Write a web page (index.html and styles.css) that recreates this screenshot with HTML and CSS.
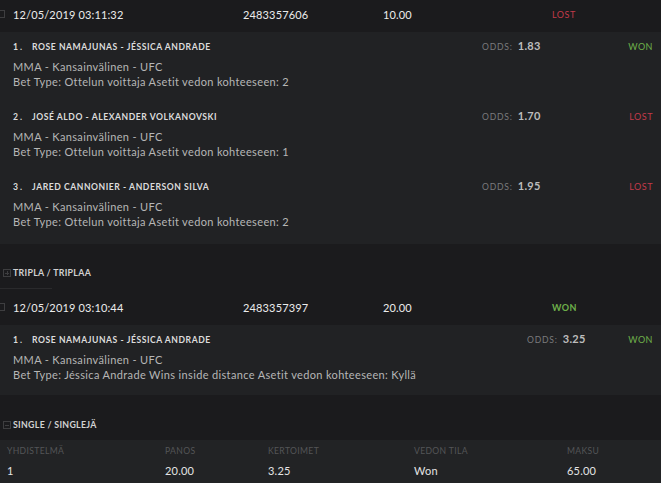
FILE: index.html
```html
<!DOCTYPE html>
<html>
<head>
<meta charset="utf-8">
<link rel="stylesheet" href="styles.css">
</head>
<body>
<div class="page">
  <div class="bet-row">
    <span class="toggle toggle-edge"></span>
    <div class="c-date">12/05/2019 03:11:32</div>
    <div class="c-id">2483357606</div>
    <div class="c-stake">10.00</div>
    <div class="c-status lost">LOST</div>
  </div>
  <div class="detail">
    <div class="item">
      <div class="item-main">
        <div class="title"><span class="num">1 .</span>ROSE NAMAJUNAS - JÉSSICA ANDRADE</div>
        <div class="line">MMA - Kansainvälinen - UFC</div>
        <div class="line">Bet Type: Ottelun voittaja Asetit vedon kohteeseen: 2</div>
      </div>
      <div class="odds"><span class="odds-label">ODDS:</span><span class="odds-val">1.83</span></div>
      <div class="status won">WON</div>
    </div>
    <div class="item">
      <div class="item-main">
        <div class="title"><span class="num">2 .</span>JOSÉ ALDO - ALEXANDER VOLKANOVSKI</div>
        <div class="line">MMA - Kansainvälinen - UFC</div>
        <div class="line">Bet Type: Ottelun voittaja Asetit vedon kohteeseen: 1</div>
      </div>
      <div class="odds"><span class="odds-label">ODDS:</span><span class="odds-val">1.70</span></div>
      <div class="status lost">LOST</div>
    </div>
    <div class="item">
      <div class="item-main">
        <div class="title"><span class="num">3 .</span>JARED CANNONIER - ANDERSON SILVA</div>
        <div class="line">MMA - Kansainvälinen - UFC</div>
        <div class="line">Bet Type: Ottelun voittaja Asetit vedon kohteeseen: 2</div>
      </div>
      <div class="odds"><span class="odds-label">ODDS:</span><span class="odds-val">1.95</span></div>
      <div class="status lost">LOST</div>
    </div>
  </div>

  <div class="section">
    <span class="toggle plus"></span>
    <span class="section-label">TRIPLA / TRIPLAA</span>
  </div>
  <div class="rule"></div>

  <div class="bet-row">
    <span class="toggle toggle-edge"></span>
    <div class="c-date">12/05/2019 03:10:44</div>
    <div class="c-id">2483357397</div>
    <div class="c-stake">20.00</div>
    <div class="c-status won bold">WON</div>
  </div>
  <div class="detail detail-single">
    <div class="item">
      <div class="item-main">
        <div class="title"><span class="num">1 .</span>ROSE NAMAJUNAS - JÉSSICA ANDRADE</div>
        <div class="line">MMA - Kansainvälinen - UFC</div>
        <div class="line">Bet Type: Jéssica Andrade Wins inside distance Asetit vedon kohteeseen: Kyllä</div>
      </div>
      <div class="odds odds-single"><span class="odds-label">ODDS:</span><span class="odds-val">3.25</span></div>
      <div class="status won">WON</div>
    </div>
  </div>

  <div class="section section-single">
    <span class="toggle minus"></span>
    <span class="section-label">SINGLE / SINGLEJÄ</span>
  </div>

  <div class="table">
    <div class="t-row t-head">
      <div class="t1">YHDISTELMÄ</div>
      <div class="t2">PANOS</div>
      <div class="t3">KERTOIMET</div>
      <div class="t4">VEDON TILA</div>
      <div class="t5">MAKSU</div>
    </div>
    <div class="t-row t-body">
      <div class="t1">1</div>
      <div class="t2">20.00</div>
      <div class="t3">3.25</div>
      <div class="t4">Won</div>
      <div class="t5">65.00</div>
    </div>
  </div>
</div>
</body>
</html>
```

FILE: styles.css
```css
html, body {
  margin: 0;
  padding: 0;
  background: #1b1b1d;
  font-family: Lato, "Noto Sans", sans-serif;
  color: #e6e6e6;
  overflow: hidden;
}
.page {
  width: 661px;
  margin-top: -4px;
}
.bet-row {
  display: flex;
  align-items: center;
  height: 36px;
  background: #1b1b1d;
  font-size: 11px;
  letter-spacing: 0.15px;
  color: #ececec;
  padding-left: 13px;
  position: relative;
}
.bet-row + .detail {
  margin-top: 0;
}
.toggle {
  position: absolute;
  width: 6px;
  height: 6px;
  border: 1px solid #3e3e40;
}
.toggle-edge {
  left: -3px;
  top: 14px;
}
.c-date { width: 230px; }
.c-id { width: 140px; }
.c-stake { width: 169px; }
.c-status {
  font-size: 9px;
  letter-spacing: 0.5px;
}
.bold { font-weight: 700; }
.lost { color: #c23a4a; }
.won { color: #6eb04a; }

.detail {
  background: #212224;
  padding: 7px 8px 15px 13px;
  display: flex;
  flex-direction: column;
  gap: 20px;
}
.detail-single {
  padding-top: 7px;
  padding-bottom: 13px;
}
.item {
  display: flex;
  align-items: flex-start;
}
.item-main { flex: 1; }
.title {
  font-size: 8.6px;
  font-weight: 700;
  color: #dcdcdc;
  line-height: 16px;
  margin-bottom: 4px;
  letter-spacing: 0.55px;
}
.num {
  display: inline-block;
  width: 19px;
  letter-spacing: 0;
}
.line {
  font-size: 11px;
  line-height: 15px;
  color: #b6b6b6;
  letter-spacing: 0.35px;
}
.odds {
  margin-top: -3px;
  line-height: 16px;
  width: 131px;
}
.odds-single {
  width: 86px;
}
.odds-label {
  font-size: 8.6px;
  color: #7a7a7c;
  letter-spacing: 0.8px;
  margin-right: 5px;
}
.odds-val {
  font-size: 11px;
  font-weight: 700;
  color: #bdbdbd;
  letter-spacing: 0.3px;
}
.status {
  font-size: 9px;
  line-height: 16px;
  width: 40px;
  text-align: right;
  letter-spacing: 0.5px;
}

.section {
  height: 44px;
  display: flex;
  align-items: flex-end;
  padding-left: 13px;
  position: relative;
  box-sizing: border-box;
}
.section .toggle {
  left: 3px;
  bottom: 11px;
}
.plus::before, .plus::after, .minus::before {
  content: "";
  position: absolute;
  background: #3e3e40;
}
.plus::before, .minus::before {
  left: 1px; right: 1px; top: 2.5px; height: 1px;
}
.plus::after {
  top: 1px; bottom: 1px; left: 2.5px; width: 1px;
}
.section-label {
  font-size: 8.8px;
  font-weight: 700;
  color: #d2d2d2;
  line-height: 12px;
  margin-bottom: 9px;
  letter-spacing: 0.3px;
}
.section-single {
  height: 45px;
}
.rule {
  width: 52px;
  height: 1px;
  background: #2a2a2c;
}

.table {
  background: #222325;
  padding-left: 7px;
  height: 60px;
}
.t-row {
  display: flex;
  align-items: center;
}
.t-head {
  height: 21px;
  font-size: 8.6px;
  color: #545557;
  letter-spacing: 0.35px;
}
.t-body {
  height: 19px;
  font-size: 11px;
  color: #e4e4e4;
  letter-spacing: 0.2px;
}
.t1 { width: 158px; }
.t2 { width: 103px; }
.t3 { width: 146px; }
.t4 { width: 153px; }
.t5 { flex: 1; }
```
